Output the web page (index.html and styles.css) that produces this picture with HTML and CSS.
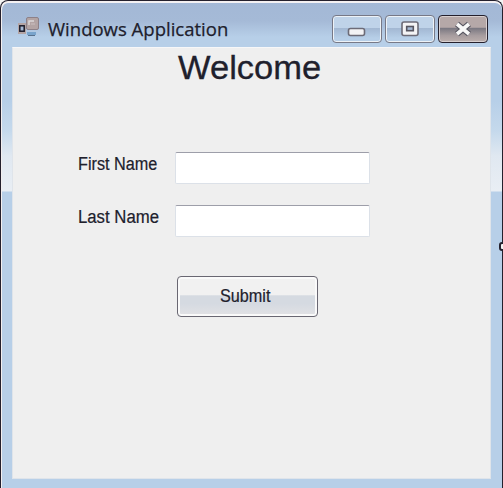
FILE: index.html
```
<!DOCTYPE html>
<html lang="en">
<head>
<meta charset="utf-8">
<title>Windows Application</title>
<link rel="stylesheet" href="styles.css">
</head>
<body>
<div class="window">
  <header class="titlebar">
    <svg class="app-icon" width="22" height="21" viewBox="0 0 22 21">
      <rect x="8.5" y=".5" width="12" height="12" rx="1.5" fill="#b3a4a4" stroke="#8d8189"/>
      <path d="M11 8V4h5" fill="none" stroke="#dcd6d8" stroke-width="1.5"/>
      <path d="M13 7h4" fill="none" stroke="#cbbfc0"/>
      <rect x="0" y="6" width="8" height="11" fill="#b3a4a4"/>
      <rect x="1.8" y="8.8" width="4.4" height="5.4" fill="#a5b9d5" stroke="#1d1c29" stroke-width="1.5"/>
      <rect x="9" y="15" width="9" height="3" fill="#79a4cc"/>
      <path d="M10 18.5h7" stroke="#57718d"/>
    </svg>
    <span class="title">Windows Application</span>
    <div class="controls">
      <button class="control minimize" aria-label="Minimize"><svg width="20" height="10" viewBox="0 0 20 10"><rect x="1.5" y="1.5" width="16" height="7" rx="2" fill="#f3f3f5" stroke="#6c6b77" stroke-width="1.6"/></svg></button>
      <button class="control" aria-label="Maximize"><svg width="18" height="16" viewBox="0 0 18 16"><rect x="1" y="1" width="16" height="13.5" rx="2" fill="#f3f3f5" stroke="#6c6b77" stroke-width="1.6"/><rect x="5.7" y="5.5" width="6.6" height="4.2" fill="#a5b9d5" stroke="#55545f" stroke-width="1.6"/></svg></button>
      <button class="control close" aria-label="Close"><svg width="20" height="16" viewBox="0 0 20 16"><path d="M4 3l12 10M16 3l-12 10" stroke="#55545f" stroke-width="6"/><path d="M4 3l12 10M16 3l-12 10" stroke="#f8f8f8" stroke-width="3.6"/></svg></button>
    </div>
  </header>
  <main class="client">
    <h1 class="heading">Welcome</h1>
    <form class="form">
      <label class="label" for="first"><span>First Name</span></label>
      <input class="field" id="first" type="text">
      <label class="label last" for="last"><span>Last Name</span></label>
      <input class="field" id="last" type="text">
      <button class="submit" type="button"><span>Submit</span></button>
    </form>
  </main>
  <i class="handle"></i>
</div>
</body>
</html>
```
FILE: styles.css
```
* { box-sizing: border-box; }
body {
  margin: 0;
  background: #f4f4f4;
  font-family: "Liberation Sans", Arial, sans-serif;
  color: #20202c;
}
.window {
  position: relative;
  width: 503px;
  height: 488px;
  padding: 0 11px 10px;
  border: solid #24202d;
  border-width: 1px 1px 0;
  border-radius: 8px 8px 0 0;
  background:
    linear-gradient(to bottom, #a3b8d6 0, #a5bad7 20px, #b7cfe8 36px, #b7cfe8 47px, transparent 47px),
    linear-gradient(to bottom, #b7cfe8 100px, #c5d9ec 130px, #e0e8f1 155px, #e9eef4 190px, #b7cfe8 191px);
  box-shadow: inset 2px 2px 0 -1px #f3eff0, inset 0 2px 0 #f3f1f4;
}
.titlebar {
  display: flex;
  height: 46px;
  padding: 14px 3px 0 6px;
}
.app-icon {
  flex: none;
  margin-top: 2px;
}
.title {
  width: 181px;
  margin: 1px 0 0 8px;
  font: 19px/27px "Open Sans", "Noto Sans", sans-serif;
  -webkit-text-stroke: .25px #20202c;
  white-space: nowrap;
  transform: scaleX(.975);
  transform-origin: left;
}
.controls {
  display: flex;
  gap: 3px;
  margin-left: auto;
}
.control {
  display: flex;
  align-items: center;
  justify-content: center;
  width: 50px;
  height: 28px;
  padding: 0 0 1px;
  border: 1px solid #777987;
  border-radius: 4px;
  background: linear-gradient(#bfd3e9 0 45%, #a2b7d2 46%, #b7cfe8 85%);
  box-shadow: inset 0 0 0 1px #edf2f7;
}
.control.minimize { padding-top: 6px; }
.control.close {
  border-color: #24202d;
  background: linear-gradient(#b5a8a8 0 44%, #77757f 45%, #a79d9f 75%, #bcafad);
  box-shadow: inset 0 0 0 1px #d8d0d0;
}
.client {
  width: 479px;
  height: 432px;
  border: 1px solid #dfe4ea;
  border-top-color: #f7f7f8;
  background: #efefef;
}
.heading {
  margin: 0 0 0 165px;
  font-size: 34px;
  font-weight: 400;
  line-height: 39px;
  transform: scaleX(1.015);
  transform-origin: left;
  -webkit-text-stroke: .3px #20202c;
}
.form {
  display: grid;
  grid-template-columns: 97px 195px;
  grid-template-rows: 32px 32px 41px;
  row-gap: 21px;
  margin: 65px 0 0 65px;
}
.label {
  font-size: 18px;
  line-height: 25px;
  white-space: nowrap;
}
.label span, .submit span {
  display: inline-block;
  transform: scaleX(.9);
  transform-origin: left;
  -webkit-text-stroke: .2px #20202c;
}
.label.last span { transform: scaleX(.93); }
.field {
  width: 195px;
  height: 32px;
  border: 1px solid #dce1e8;
  border-top-color: #9d9ea9;
  border-radius: 2px;
  background: #fff;
}
.submit {
  grid-column: 2;
  width: 141px;
  height: 41px;
  margin: 18px 0 0 2px;
  padding: 0 0 0 42px;
  border: 1px solid #696772;
  border-radius: 4px;
  background: linear-gradient(#f1f1f1 0 46%, #d5dae1 48%, #d5dae1 68%, #e2e2e5);
  box-shadow: inset 0 0 0 2px #fafafa;
  color: inherit;
  font: 18px "Liberation Sans", Arial, sans-serif;
  text-align: left;
}
.handle {
  position: absolute;
  top: 241px;
  right: -4px;
  width: 7px;
  height: 9px;
  border: 2px solid #24202d;
  border-radius: 3px;
  background: #f4f4f4;
}
```
